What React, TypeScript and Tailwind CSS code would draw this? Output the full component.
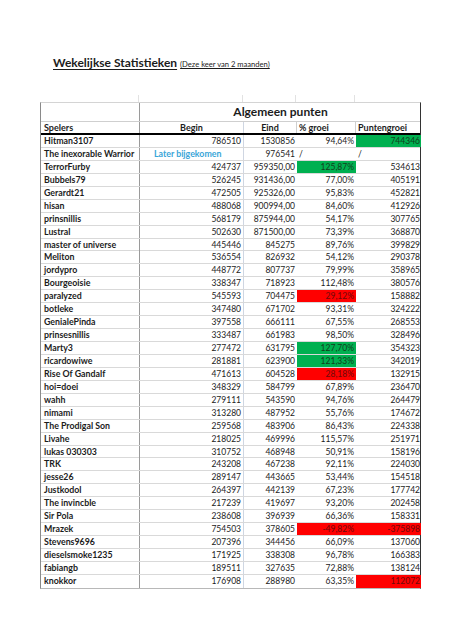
type Row = {
  name: string;
  begin: string;
  eind: string;
  groei: string;
  punten: string;
  groeiBg?: "green" | "red";
  puntenBg?: "green" | "red";
};

const rows: Row[] = [
  { name: "Hitman3107", begin: "786510", eind: "1530856", groei: "94,64%", punten: "744346", puntenBg: "green" },
  { name: "The inexorable Warrior", begin: "", eind: "976541", groei: "/", punten: "/" },
  { name: "TerrorFurby", begin: "424737", eind: "959350,00", groei: "125,87%", punten: "534613", groeiBg: "green" },
  { name: "Bubbels79", begin: "526245", eind: "931436,00", groei: "77,00%", punten: "405191" },
  { name: "Gerardt21", begin: "472505", eind: "925326,00", groei: "95,83%", punten: "452821" },
  { name: "hisan", begin: "488068", eind: "900994,00", groei: "84,60%", punten: "412926" },
  { name: "prinsnillis", begin: "568179", eind: "875944,00", groei: "54,17%", punten: "307765" },
  { name: "Lustral", begin: "502630", eind: "871500,00", groei: "73,39%", punten: "368870" },
  { name: "master of universe", begin: "445446", eind: "845275", groei: "89,76%", punten: "399829" },
  { name: "Meliton", begin: "536554", eind: "826932", groei: "54,12%", punten: "290378" },
  { name: "jordypro", begin: "448772", eind: "807737", groei: "79,99%", punten: "358965" },
  { name: "Bourgeoisie", begin: "338347", eind: "718923", groei: "112,48%", punten: "380576" },
  { name: "paralyzed", begin: "545593", eind: "704475", groei: "29,12%", punten: "158882", groeiBg: "red" },
  { name: "botleke", begin: "347480", eind: "671702", groei: "93,31%", punten: "324222" },
  { name: "GenialePinda", begin: "397558", eind: "666111", groei: "67,55%", punten: "268553" },
  { name: "prinsesnillis", begin: "333487", eind: "661983", groei: "98,50%", punten: "328496" },
  { name: "Marty3", begin: "277472", eind: "631795", groei: "127,70%", punten: "354323", groeiBg: "green" },
  { name: "ricardowiwe", begin: "281881", eind: "623900", groei: "121,33%", punten: "342019", groeiBg: "green" },
  { name: "Rise Of Gandalf", begin: "471613", eind: "604528", groei: "28,18%", punten: "132915", groeiBg: "red" },
  { name: "hoi=doei", begin: "348329", eind: "584799", groei: "67,89%", punten: "236470" },
  { name: "wahh", begin: "279111", eind: "543590", groei: "94,76%", punten: "264479" },
  { name: "nimami", begin: "313280", eind: "487952", groei: "55,76%", punten: "174672" },
  { name: "The Prodigal Son", begin: "259568", eind: "483906", groei: "86,43%", punten: "224338" },
  { name: "Livahe", begin: "218025", eind: "469996", groei: "115,57%", punten: "251971" },
  { name: "lukas 030303", begin: "310752", eind: "468948", groei: "50,91%", punten: "158196" },
  { name: "TRK", begin: "243208", eind: "467238", groei: "92,11%", punten: "224030" },
  { name: "jesse26", begin: "289147", eind: "443665", groei: "53,44%", punten: "154518" },
  { name: "Justkodol", begin: "264397", eind: "442139", groei: "67,23%", punten: "177742" },
  { name: "The invincble", begin: "217239", eind: "419697", groei: "93,20%", punten: "202458" },
  { name: "Sir Pola", begin: "238608", eind: "396939", groei: "66,36%", punten: "158331" },
  { name: "Mrazek", begin: "754503", eind: "378605", groei: "-49,82%", punten: "-375898", groeiBg: "red", puntenBg: "red" },
  { name: "Stevens9696", begin: "207396", eind: "344456", groei: "66,09%", punten: "137060" },
  { name: "dieselsmoke1235", begin: "171925", eind: "338308", groei: "96,78%", punten: "166383" },
  { name: "fabiangb", begin: "189511", eind: "327635", groei: "72,88%", punten: "138124" },
  { name: "knokkor", begin: "176908", eind: "288980", groei: "63,35%", punten: "112072", puntenBg: "red" },
];

function fill(bg?: "green" | "red") {
  if (bg === "green") return "bg-[#00b050] text-[#123d1c]";
  if (bg === "red") return "bg-[#ff0000] text-[#6e0a0a]";
  return "";
}

const cols = "grid grid-cols-[99px_104px_53px_59px_65px]";

export default function App() {
  return (
    <div className="h-[640px] w-[453px] overflow-hidden bg-white font-['Lato',sans-serif] text-[#1c1c1c]">
      {/* Titel */}
      <div className="flex items-baseline gap-[3px] pl-[53px] pt-[54px]">
        <span className="text-[12px] font-bold underline underline-offset-2">Wekelijkse Statistieken</span>
        <span className="text-[7.6px] underline underline-offset-1">(Deze keer van 2 maanden)</span>
      </div>

      {/* Rasterlijnen boven de tabel */}
      <div className={`${cols} ml-[40px] mt-[23px] h-[7px]`}>
        <div className="border-r border-[#e2e2e2]" />
        <div className="border-r border-[#e2e2e2]" />
        <div className="border-r border-[#e2e2e2]" />
        <div className="border-r border-[#e2e2e2]" />
        <div />
      </div>

      <div className="ml-[40px] w-[381px] border-l border-r border-t border-b border-l-[#8a8a8a] border-r-[#333] border-t-[#d4d4d4] border-b-[#b8b8b8]">
        {/* Kop */}
        <div className={`${cols} h-[19px] border-b border-[#cfcfcf]`}>
          <div className="border-r border-[#9a9a9a]" />
          <div className="col-span-4 flex items-center justify-center text-[12px] font-bold">Algemeen punten</div>
        </div>
        <div className={`${cols} h-[13px] border-b-2 border-black text-[9px] font-bold leading-[11px]`}>
          <div className="border-r border-[#9a9a9a] pl-[3px]">Spelers</div>
          <div className="border-r border-[#cfd6e2] text-center">Begin</div>
          <div className="border-r border-[#cfcfcf] text-center">Eind</div>
          <div className="border-r border-[#cfcfcf] pl-[2px]">% groei</div>
          <div className="pl-[2px]">Puntengroei</div>
        </div>

        {/* Spelers */}
        {rows.map((r, i) => (
          <div
            key={r.name}
            className={`${cols} h-[12.95px] text-[8.5px] leading-[12px] ${i < rows.length - 1 ? "border-b border-[#d9d9d9]" : ""}`}
          >
            <div className="truncate border-r border-[#9a9a9a] pl-[3px] text-[8.8px] font-bold">{r.name}</div>
            {r.begin ? (
              <div className="border-r border-[#cfd6e2] pr-[2px] text-right">{r.begin}</div>
            ) : (
              <div className="border-r border-[#cfd6e2] pl-[14px] text-[8.8px] font-bold text-[#3aa6d8]">Later bijgekomen</div>
            )}
            <div className="pr-[2px] text-right">{r.eind}</div>
            {r.groei === "/" ? (
              <div className="pl-[2px]">/</div>
            ) : (
              <div className={`pr-[2px] text-right ${fill(r.groeiBg)}`}>{r.groei}</div>
            )}
            {r.punten === "/" ? (
              <div className="pl-[2px]">/</div>
            ) : (
              <div className={`pr-[1px] text-right ${fill(r.puntenBg)}`}>{r.punten}</div>
            )}
          </div>
        ))}
      </div>
    </div>
  );
}
